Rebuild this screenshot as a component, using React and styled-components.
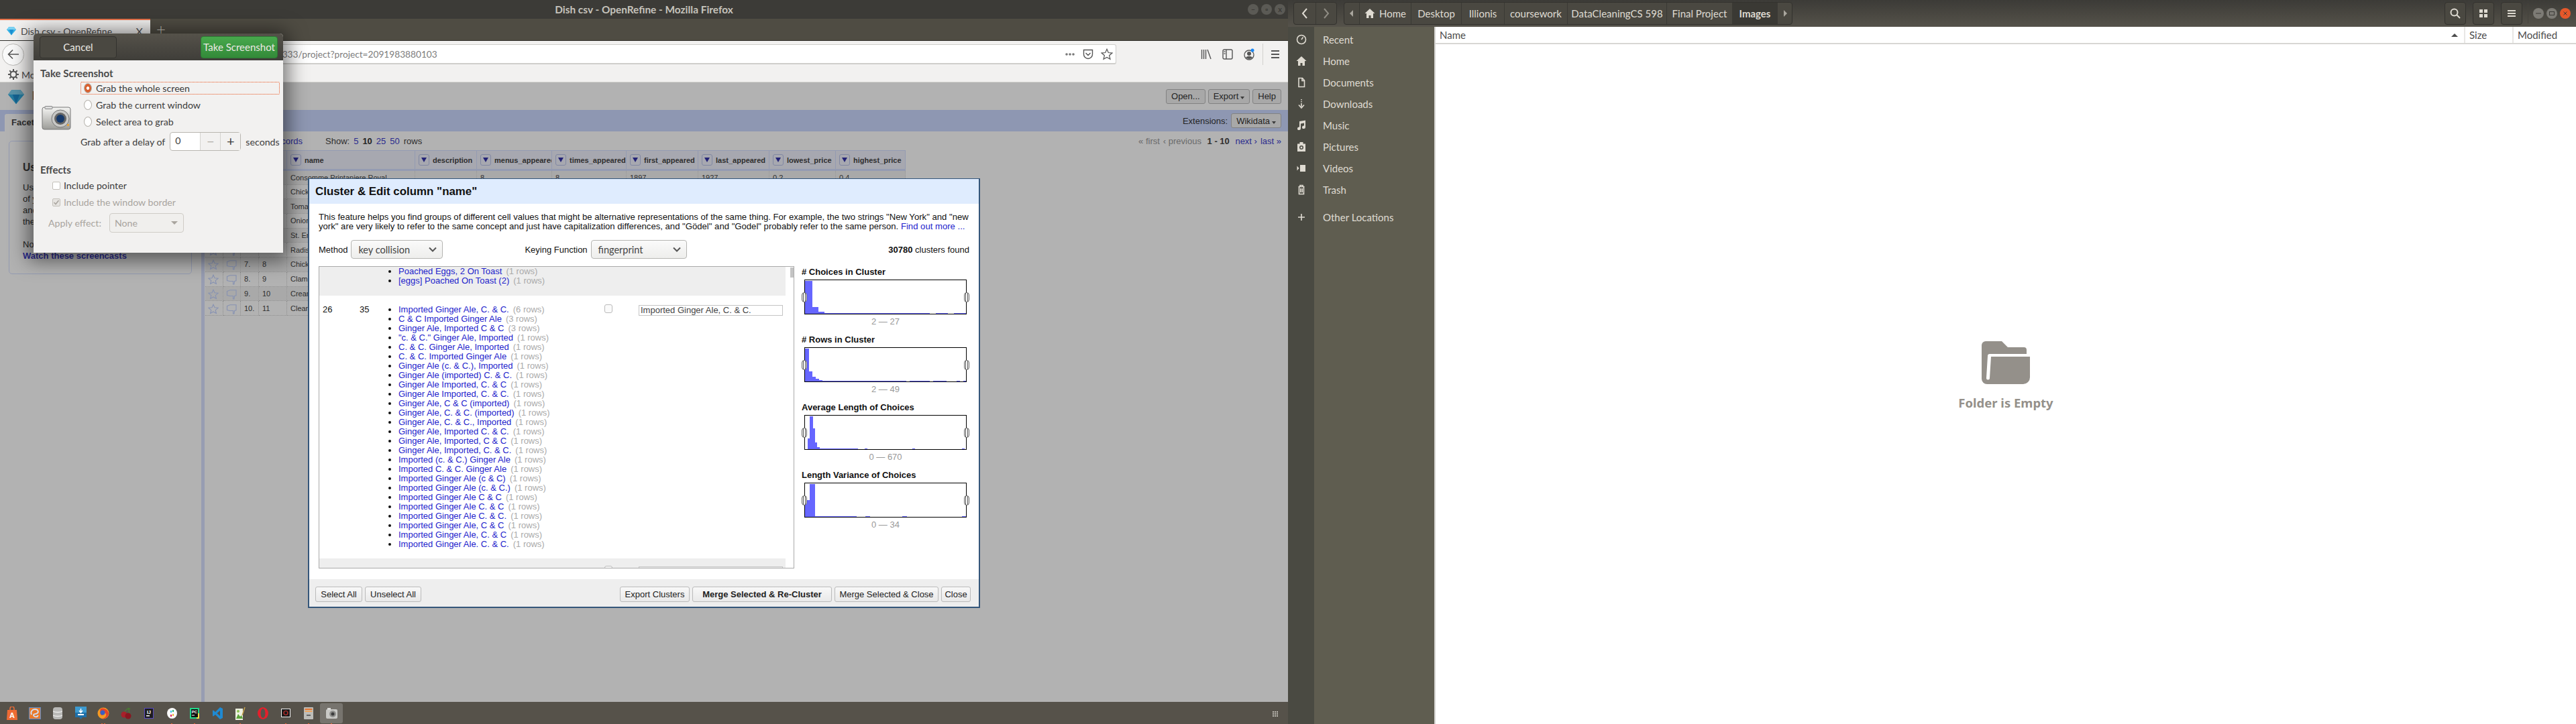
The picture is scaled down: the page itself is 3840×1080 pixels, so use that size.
import styled, { createGlobalStyle } from "styled-components";

const GlobalStyle = createGlobalStyle`
  html, body { margin: 0; padding: 0; background: #3c3b37; }
  * { box-sizing: border-box; }
`;

const UI_FONT = `Lato, "Noto Sans", sans-serif`;
const PAGE_FONT = `"Liberation Sans", Arial, sans-serif`;

const Desktop = styled.div`
  position: relative;
  display: flex;
  width: 3840px;
  height: 1080px;
  overflow: hidden;
  font-family: ${UI_FONT};
`;

/* ---------- firefox window ---------- */
const Firefox = styled.div`
  display: flex;
  flex-direction: column;
  width: 1920px;
  height: 1080px;
  flex: none;
`;

const TitleBar = styled.div`
  position: relative;
  height: 28px;
  display: flex;
  align-items: center;
  justify-content: center;
  background: #3c3b37;
  color: #c6c3bc;
  font-size: 15.4px;
  font-weight: 700;
`;

const WindowDots = styled.div`
  position: absolute;
  right: 4px;
  top: 6px;
  display: flex;
  gap: 4px;
`;

const WindowDot = styled.div`
  width: 16px;
  height: 16px;
  border-radius: 50%;
  background: #5b5a55;
  color: #3c3b37;
  font-size: 11px;
  line-height: 16px;
  text-align: center;
`;

const TabBar = styled.div`
  height: 33px;
  display: flex;
  align-items: stretch;
  background: #4f4c43;
  border-bottom: 1px solid #2f2e2a;
`;

const Tab = styled.div`
  width: 224px;
  display: flex;
  align-items: center;
  gap: 7px;
  padding: 2px 11px 0 10px;
  background: #f2f1f0;
  border-top: 2px solid #e9734a;
  color: #4c4c4c;
  font-size: 14px;
`;

const TabClose = styled.span`
  margin-left: auto;
  font-size: 16px;
  color: #555;
`;

const NewTab = styled.div`
  width: 32px;
  text-align: center;
  color: #c9c6bf;
  font-size: 24px;
  line-height: 30px;
  font-weight: 300;
`;

const NavBar = styled.div`
  height: 39px;
  display: flex;
  align-items: center;
  padding: 1px 10px 0 3px;
  background: #f2f1f0;
`;

const BackButton = styled.div`
  width: 33px;
  height: 33px;
  border: 1px solid #b9b8b5;
  border-radius: 50%;
  background: #fafafa;
  display: flex;
  align-items: center;
  justify-content: center;
`;

const AddressBar = styled.div`
  flex: none;
  width: 1534px;
  height: 30px;
  margin-left: 94px;
  display: flex;
  align-items: center;
  gap: 11px;
  padding: 0 4px 0 221px;
  background: #fff;
  border: 1px solid #cfcecb;
  border-bottom-width: 2px;
  border-radius: 3px;
  color: #7d7d7d;
  font-size: 13.7px;
`;

const Url = styled.span`
  flex: 1;
`;

const NavTools = styled.div`
  display: flex;
  align-items: center;
  gap: 16px;
  margin-left: 126px;
  height: 30px;
`;

const NavDivider = styled.div`
  width: 1px;
  height: 32px;
  background: #d2d1ce;
  margin: 0 -5px 0 -4px;
`;

const BookmarkBar = styled.div`
  height: 23px;
  display: flex;
  align-items: center;
  gap: 4px;
  padding-left: 12px;
  background: #f2f1f0;
  border-bottom: 1px solid #cfcecb;
  color: #4c4c4c;
  font-size: 14px;
`;

/* ---------- openrefine page (dimmed by a modal shade) ---------- */
const Page = styled.div`
  position: relative;
  flex: 1;
  min-height: 0;
  display: flex;
  flex-direction: column;
  overflow: hidden;
  background: #fff;
  font-family: ${PAGE_FONT};
  font-size: 13px;
  color: #222;
`;

const Shade = styled.div`
  position: absolute;
  inset: 0;
  background: rgba(0, 0, 0, 0.3);
`;

const PageHeader = styled.div`
  height: 41px;
  flex: none;
  display: flex;
  align-items: center;
  padding: 0 10px 0 12px;
  gap: 4px;
`;

const ProjectName = styled.div`
  margin-left: 8px;
  margin-right: auto;
  font-size: 18px;
  font-weight: 700;
`;

const PageButton = styled.div`
  height: 22px;
  display: flex;
  align-items: center;
  gap: 3px;
  padding: 0 7px;
  border: 1px solid #bbb;
  border-radius: 3px;
  background: #f1f1f1;
  color: #333;
  font-size: 13px;
`;

const Caret = styled.span`
  width: 0;
  height: 0;
  margin-top: 5px;
  border-left: 3.5px solid transparent;
  border-right: 3.5px solid transparent;
  border-top: 4px solid #555;
`;

const Band = styled.div`
  height: 32px;
  flex: none;
  display: flex;
  align-items: flex-end;
  padding: 0 10px 0 7px;
  background: #ccd9ff;
`;

const FacetTab = styled.div`
  height: 26px;
  padding: 5px 10px;
  background: #fff;
  border-radius: 3px 3px 0 0;
  font-weight: 700;
  font-size: 13px;
  color: #444;
`;

const Extensions = styled.div`
  margin-left: auto;
  align-self: center;
  display: flex;
  align-items: center;
  gap: 5px;
  font-size: 13px;
  color: #333;
`;

const PageBody = styled.div`
  flex: 1;
  display: flex;
  min-height: 0;
`;

const LeftPanel = styled.div`
  width: 300px;
  flex: none;
  padding: 14px 14px 0 13px;
`;

const HelpBox = styled.div`
  height: 199px;
  padding: 30px 20px;
  border: 1px solid #d5deff;
  border-radius: 5px;
  font-size: 13px;
  line-height: 17px;
  color: #333;
`;

const HelpTitle = styled.div`
  font-size: 15.6px;
  font-weight: 700;
  color: #444;
  margin-bottom: 13px;
`;

const HelpLink = styled.div`
  font-weight: 700;
  color: #4040cc;
`;

const PanelDivider = styled.div`
  width: 5px;
  flex: none;
  background: #d9e1ff;
`;

const DataPanel = styled.div`
  flex: 1;
  min-width: 0;
`;

const ViewBar = styled.div`
  height: 28px;
  display: flex;
  align-items: center;
  gap: 34px;
  padding-right: 10px;
  font-size: 13px;
  color: #444;
`;

const ViewMode = styled.div`
  width: 146px;
  text-align: right;
  white-space: nowrap;
`;

const PageLink = styled.a`
  color: ${(p) => (p.$off ? "#999" : p.$on ? "#333" : "#4040cc")};
  font-weight: ${(p) => (p.$on ? 700 : 400)};
`;

const ShowRows = styled.div`
  display: flex;
  gap: 6px;
`;

const Pager = styled.div`
  margin-left: auto;
  display: flex;
  gap: 5px;
`;

const Grid = styled.table`
  table-layout: fixed;
  width: 1044px;
  border-collapse: collapse;
  font-size: 11px;
  color: #444;
`;

const HeadCell = styled.th`
  height: 29px;
  padding: 0 0 0 5px;
  text-align: left;
  white-space: nowrap;
  overflow: hidden;
  background: #f0f1fd;
  border: 1px solid #d5deff;
  border-bottom: 3px solid #d5deff;
  font-size: 11px;
  color: #444;
`;

const HeadInner = styled.div`
  display: flex;
  align-items: center;
  gap: 5px;
`;

const ColumnMenu = styled.span`
  flex: none;
  width: 16px;
  height: 17px;
  display: flex;
  align-items: center;
  justify-content: center;
  border: 1px solid #b9c3ea;
  border-radius: 3px;
  &::after {
    content: "";
    border-left: 4.5px solid transparent;
    border-right: 4.5px solid transparent;
    border-top: 7px solid #3333aa;
  }
`;

const Row = styled.tr`
  height: 21.7px;
  background: ${(p) => (p.$odd ? "#f2f2f2" : "transparent")};
`;

const Cell = styled.td`
  padding: 0 0 0 5px;
  border-right: 1px dotted #ccc;
  border-bottom: 1px dotted #ccc;
  white-space: nowrap;
  overflow: hidden;
`;

const MarkCell = styled(Cell)`
  padding: 2px 0 0 4px;
  line-height: 0;
`;

/* ---------- dock ---------- */
const Dock = styled.div`
  position: relative;
  height: 33px;
  flex: none;
  display: flex;
  align-items: center;
  padding-left: 1px;
  background: #56524a;
`;

const DockItem = styled.div`
  position: relative;
  width: 34px;
  height: 30px;
  display: flex;
  align-items: center;
  justify-content: center;
  border-radius: 3px;
  background: ${(p) => (p.$active ? "#77746e" : "transparent")};
`;

const DockDots = styled.div`
  position: absolute;
  bottom: -2px;
  display: flex;
  gap: 2px;
`;

const DockDot = styled.span`
  width: 2px;
  height: 2px;
  background: #e9622c;
`;

const AppGrid = styled.div`
  position: absolute;
  right: 15px;
  top: 14px;
  display: grid;
  grid-template-columns: repeat(3, 2px);
  gap: 1px;
  & > span { width: 2px; height: 2px; background: #bfbcb5; }
`;

/* ---------- nautilus window ---------- */
const Files = styled.div`
  flex: 1;
  display: flex;
  flex-direction: column;
  background: #fff;
`;

const HeaderBar = styled.div`
  height: 40px;
  flex: none;
  display: flex;
  align-items: center;
  padding: 0 8px;
  gap: 10px;
  background: linear-gradient(#3c3b37, #55524a);
`;

const ButtonGroup = styled.div`
  display: flex;
  height: 34px;
  border: 1px solid #33322e;
  border-radius: 4px;
  background: #4a4841;
  color: #dfdbd2;
  font-size: 15px;
`;

const Segment = styled.div`
  width: ${(p) => p.$w}px;
  display: flex;
  align-items: center;
  justify-content: center;
  gap: 6px;
  border-left: ${(p) => (p.$first ? "none" : "1px solid #3a3934")};
  background: ${(p) => (p.$current ? "#3a3934" : "transparent")};
  font-weight: ${(p) => (p.$current ? 700 : 400)};
  color: ${(p) => (p.$dim ? "#8f8c84" : "#dfdbd2")};
`;

const HeaderTools = styled.div`
  margin-left: auto;
  display: flex;
  align-items: center;
  gap: 10px;
`;

const ToolButton = styled.div`
  width: 32px;
  height: 34px;
  display: flex;
  align-items: center;
  justify-content: center;
  border: 1px solid #33322e;
  border-radius: 4px;
  background: #4a4841;
`;

const HeaderDivider = styled.div`
  width: 1px;
  height: 30px;
  margin: 0 -3px 0 -2px;
  background: #45433d;
`;

const WindowButtons = styled.div`
  display: flex;
  gap: 4px;
`;

const WindowButton = styled.div`
  width: 16px;
  height: 16px;
  border-radius: 50%;
  display: flex;
  align-items: center;
  justify-content: center;
  background: ${(p) => (p.$close ? "#e6582a" : "#7d7b75")};
  color: #3c3b37;
`;

const FilesBody = styled.div`
  flex: 1;
  display: flex;
  min-height: 0;
`;

const Sidebar = styled.div`
  width: 218px;
  flex: none;
  display: flex;
  flex-direction: column;
  padding-top: 3px;
  background: linear-gradient(90deg, #4a4a42 39px, #5f5d50 39px);
`;

const SidebarItem = styled.div`
  height: 32px;
  margin-top: ${(p) => (p.$gap ? "9px" : "0")};
  display: flex;
  align-items: center;
  color: #dfdbd2;
  font-size: 15px;
`;

const SidebarIcon = styled.div`
  width: 39px;
  flex: none;
  display: flex;
  justify-content: center;
`;

const SidebarLabel = styled.span`
  margin-left: 13px;
`;

const Content = styled.div`
  flex: 1;
  display: flex;
  flex-direction: column;
  border-left: 2px solid #d4d3d0;
`;

const ColumnBar = styled.div`
  height: 26px;
  flex: none;
  display: grid;
  grid-template-columns: 1fr 72px 95px;
  background: #fff;
  border-bottom: 2px solid #d8d7d4;
  color: #4c4c4c;
  font-size: 15px;
`;

const ColumnHead = styled.div`
  position: relative;
  display: flex;
  align-items: center;
  padding-left: 6px;
  border-left: ${(p) => (p.$first ? "none" : "2px solid #e8e7e5")};
`;

const SortArrow = styled.span`
  margin-left: auto;
  margin-right: 9px;
  border-left: 5px solid transparent;
  border-right: 5px solid transparent;
  border-bottom: 5px solid #4c4c4c;
`;

const EmptyState = styled.div`
  flex: 1;
  display: flex;
  flex-direction: column;
  align-items: center;
  justify-content: center;
  gap: 15px;
  padding-bottom: 24px;
  color: #94908a;
  font-family: "Noto Sans", sans-serif;
  font-size: 18.5px;
  font-weight: 700;
`;

/* ---------- take screenshot window ---------- */
const ShotWindow = styled.div`
  position: absolute;
  left: 50px;
  top: 50px;
  width: 372px;
  height: 327px;
  background: #f2f1f0;
  border-radius: 5px 5px 0 0;
  box-shadow: 0 4px 28px 8px rgba(0, 0, 0, 0.5);
  color: #3d3d3d;
  font-size: 14.2px;
`;

const ShotHeader = styled.div`
  height: 40px;
  display: flex;
  align-items: center;
  justify-content: space-between;
  padding: 0 8px 0 9px;
  background: linear-gradient(#55524a, #3f3e39);
  border-radius: 5px 5px 0 0;
`;

const ShotButton = styled.div`
  width: 115px;
  height: 33px;
  display: flex;
  align-items: center;
  justify-content: center;
  border: 1px solid ${(p) => (p.$primary ? "#2c7a33" : "#33322e")};
  border-radius: 4px;
  background: ${(p) => (p.$primary ? "linear-gradient(#47a84c, #338a39)" : "#4a4841")};
  color: #ebe9e4;
  font-size: 15px;
`;

const ShotBody = styled.div`
  padding: 10px 10px 0;
`;

const ShotHeading = styled.div`
  font-size: 15px;
  font-weight: 700;
  line-height: 18px;
  color: #4a4a4a;
`;

const ShotGrab = styled.div`
  display: flex;
  margin-top: 4px;
`;

const CameraSlot = styled.div`
  width: 60px;
  flex: none;
  display: flex;
  align-items: center;
  padding: 4px 0 0 2px;
`;

const ShotOptions = styled.div`
  flex: 1;
`;

const FocusRing = styled.div`
  border: 1px dotted ${(p) => (p.$on ? "#e95420" : "transparent")};
  border-radius: 2px;
  height: 19px;
  margin-bottom: 6px;
  display: flex;
  align-items: center;
  gap: 6px;
  padding-left: 4px;
`;

const Radio = styled.span`
  width: 12px;
  height: 15px;
  flex: none;
  border-radius: 50%;
  border: 1px solid #b5b2ac;
  background: ${(p) =>
    p.$on ? "radial-gradient(circle, #fff 0 2px, #d9602f 2.6px)" : "#fff"};
`;

const DelayRow = styled.div`
  display: flex;
  align-items: center;
  gap: 7px;
  white-space: nowrap;
`;

const SpinBox = styled.div`
  width: 106px;
  flex: none;
  height: 28px;
  display: flex;
  border: 1px solid #b9b6b0;
  border-radius: 4px;
  background: #fff;
`;

const SpinValue = styled.div`
  flex: 1;
  padding: 3px 0 0 7px;
`;

const SpinButton = styled.div`
  width: 30px;
  text-align: center;
  border-left: 1px solid #d5d3cf;
  background: #f2f1f0;
  font-size: 20px;
  line-height: 24px;
  color: ${(p) => (p.$dim ? "#b0ada7" : "#3d3d3d")};
`;

const EffectsHeading = styled(ShotHeading)`
  margin: 19px 0 2px;
`;

const CheckRow = styled.div`
  height: 25px;
  display: flex;
  align-items: center;
  gap: 5px;
  padding-left: 18px;
  color: ${(p) => (p.$off ? "#a9a59f" : "#3d3d3d")};
`;

const CheckBox = styled.span`
  width: 12px;
  height: 12px;
  flex: none;
  display: flex;
  align-items: center;
  justify-content: center;
  border: 1px solid #c3c0ba;
  border-radius: 2px;
  background: ${(p) => (p.$off ? "#e6e4e1" : "#fff")};
`;

const EffectRow = styled.div`
  display: flex;
  align-items: center;
  gap: 12px;
  margin-top: 4px;
  padding-left: 12px;
  color: #a9a59f;
`;

const EffectSelect = styled.div`
  width: 111px;
  height: 29px;
  display: flex;
  align-items: center;
  justify-content: space-between;
  padding: 0 8px 0 7px;
  border: 1px solid #cfccc7;
  border-radius: 4px;
  background: #f0efed;
`;

const EffectCaret = styled.span`
  border-left: 5px solid transparent;
  border-right: 5px solid transparent;
  border-top: 5px solid #a9a59f;
`;

/* ---------- cluster dialog ---------- */
const ClusterDialog = styled.div`
  position: absolute;
  left: 459px;
  top: 266px;
  width: 1002px;
  height: 641px;
  display: flex;
  flex-direction: column;
  background: #fff;
  border: 2px solid #34567a;
  border-top-width: 1px;
  font-family: ${PAGE_FONT};
  font-size: 13px;
  color: #111;
`;

const DialogTitle = styled.div`
  height: 37px;
  flex: none;
  padding: 9px 0 0 9px;
  background: #dfecfe;
  font-size: 16.9px;
  font-weight: 700;
  line-height: 20px;
`;

const DialogBody = styled.div`
  flex: 1;
  min-height: 0;
  padding: 13px 0 0 14px;
`;

const Intro = styled.div`
  width: 970px;
  line-height: 14px;
  font-size: 13.13px;
`;

const IntroLink = styled.a`
  color: #2222cc;
`;

const MethodRow = styled.div`
  width: 970px;
  margin-top: 13px;
  display: flex;
  align-items: center;
  height: 28px;
`;

const Picker = styled.div`
  width: ${(p) => p.$w}px;
  height: 28px;
  margin-left: 5px;
  margin-right: ${(p) => p.$after || 0}px;
  display: flex;
  align-items: center;
  justify-content: space-between;
  padding: 0 8px 0 10px;
  border: 1px solid #b5b5b2;
  border-radius: 4px;
  background: linear-gradient(#fafafa, #eeeeec);
  font-family: ${UI_FONT};
  font-size: 14.5px;
  color: #444;
`;

const ClusterCount = styled.div`
  margin-left: auto;
`;

const ClusterColumns = styled.div`
  display: flex;
  margin-top: 11px;
  gap: 11px;
`;

const ClusterBox = styled.div`
  position: relative;
  width: 709px;
  height: 451px;
  overflow: hidden;
  border: 1px solid #aaa;
  flex: none;
`;

const ScrollTrack = styled.div`
  position: absolute;
  right: 0;
  top: 0;
  width: 12px;
  height: 100%;
  background: #fff;
  &::after {
    content: "";
    position: absolute;
    right: 0;
    top: 1px;
    width: 5px;
    height: 15px;
    background: #c4c4c4;
  }
`;

const ClusterRow = styled.div`
  width: 696px;
  display: flex;
  align-items: flex-start;
  background: ${(p) => (p.$gray ? "#eeeeee" : "#fff")};
  height: ${(p) => p.$h}px;
  padding-top: ${(p) => p.$top || 0}px;
`;

const CountCell = styled.div`
  width: ${(p) => p.$w}px;
  flex: none;
  padding-left: 5px;
  line-height: 14px;
`;

const Choices = styled.ul`
  width: ${(p) => p.$w}px;
  flex: none;
  margin: 0;
  padding: 0 0 0 ${(p) => p.$indent}px;
  line-height: 14px;
`;

const Choice = styled.li`
  white-space: nowrap;
`;

const ChoiceLink = styled.a`
  color: #2222cc;
`;

const ChoiceRows = styled.span`
  margin-left: 6px;
  color: #aaa;
`;

const ClusterCheck = styled.span`
  flex: none;
  width: 12px;
  height: 13px;
  margin: -1px 39px 0 0;
  border: 1px solid #bbb;
  border-radius: 3px;
  background: #fafafa;
`;

const ClusterInput = styled.div`
  flex: none;
  width: 215px;
  height: 16px;
  padding-left: 2px;
  line-height: 14px;
  border: 1px solid #c4c4c4;
  white-space: nowrap;
  color: #444;
`;

const HistColumn = styled.div`
  flex: none;
  width: 260px;
  margin-top: 1px;
`;

const HistBlock = styled.div`
  height: 101px;
`;

const HistLabel = styled.div`
  height: 15px;
  line-height: 15px;
  font-weight: 700;
`;

const HistFrame = styled.div`
  position: relative;
  width: 242px;
  height: 52px;
  margin: 4px 0 0 4px;
  border: 1px solid #000;
`;

const HistHandle = styled.div`
  position: absolute;
  top: 18px;
  ${(p) => (p.$right ? "right: -5px;" : "left: -5px;")}
  width: 8px;
  height: 15px;
  border: 1px solid #666;
  border-radius: 4px;
  background: linear-gradient(90deg, #fff 1px, #555 1px, #555 2px, #fff 2px, #fff 4px, #555 4px, #555 5px, #fff 5px);
`;

const HistBars = styled.svg`
  display: block;
`;

const HistRange = styled.div`
  margin: 3px 0 0 4px;
  width: 242px;
  text-align: center;
  line-height: 15px;
  color: #999;
`;

const DialogFooter = styled.div`
  height: 41px;
  flex: none;
  display: flex;
  align-items: center;
  gap: 4px;
  padding: 3px 11px 0 9px;
  background: #eeeeee;
`;

const FooterButton = styled.div`
  height: 23px;
  display: flex;
  align-items: center;
  justify-content: center;
  width: ${(p) => p.$w}px;
  margin-left: ${(p) => p.$push || 0}px;
  border: 1px solid #bbb;
  border-radius: 3px;
  background: linear-gradient(#f8f8f8, #e9e9e9);
  font-weight: ${(p) => (p.$strong ? 700 : 400)};
  color: #222;
`;

/* ---------- drawings ---------- */
const Diamond = ({ size = 16 }) => (
  <svg width={size} height={size} viewBox="0 0 16 16">
    <path d="M3.5 1.5h9L16 6 8 15.5 0 6z" fill="#35b2e6" />
    <path d="M3.5 1.5h9L16 6H0z" fill="#7fd3f3" />
    <path d="M4.5 6h7L8 15.5z" fill="#1d8fd1" />
  </svg>
);

const StarMark = ({ color = "#c2d2ff", size = 16 }) => (
  <svg width={size} height={size} viewBox="0 0 16 16" fill="none" stroke={color} strokeWidth="1.1">
    <path d="M8 1.2l2 4.6 5 .5-3.8 3.3 1.2 4.9L8 12 3.6 14.5l1.2-4.9L1 6.3l5-.5z" />
  </svg>
);

const FlagMark = () => (
  <svg width="16" height="16" viewBox="0 0 16 16" fill="none" stroke="#c2d2ff" strokeWidth="1.1">
    <path d="M1.5 3.5L6 1.8h9v8l-2.4.6L12 15h-1.5l.2-4.5H5.5L1.5 9.5z" />
  </svg>
);

const HeaderIcon = ({ d, fill, w = 16, stroke = "#dfdbd2" }) => (
  <svg width={w} height={w} viewBox="0 0 16 16" fill={fill ? stroke : "none"} stroke={fill ? "none" : stroke} strokeWidth="1.6">
    <path d={d} />
  </svg>
);

const ICONS = {
  recent: "M8 1.5a6.5 6.5 0 1 0 0 13 6.5 6.5 0 0 0 0-13zM8 8l2.5-3.5",
  documents: "M4 1.5h5.5L12.5 5v9.5H4zM9 1.5V5.500h3.500",
  downloads: "M8 1v1.500M8 4v1.500M8 7v5M4 9.500l4 4.500 4-4.500",
  trash: "M3.500 3.500h9M6 3.500V1.500h4v2M4.500 3.500v11h7v-11M6.800 6v6M9.200 6v6",
  plus: "M8 3v10M3 8h10",
};

const FILLS = {
  home: "M8 1L.5 8H3v7h3.500v-4h3v4H13V8h2.500z",
  music: "M5 2l9-1.500v10.200a2.500 2.300 0 1 1-2-2.200V4.500L7 5.500v7.200a2.500 2.300 0 1 1-2-2.200z",
  pictures: "M5.500 1h5v2.500H14v11.500H2V3.500h3.500zM8 6a3 3 0 1 0 0 6 3 3 0 0 0 0-6zm0 1.500a1.500 1.500 0 1 1 0 3 1.500 1.500 0 0 1 0-3z",
  videos: "M6 3h8v10H6zM1.500 4.500l3 3.500-3 3.500z",
};

const NavArrow = ({ left, color = "#dfdbd2" }) => (
  <svg width="14" height="18" viewBox="0 0 14 18" fill="none" stroke={color} strokeWidth="2">
    <path d={left ? "M10 2L4 9l6 7" : "M4 2l6 7-6 7"} />
  </svg>
);

const PathCaret = ({ left }) => (
  <svg width="8" height="14" viewBox="0 0 8 14">
    <path d={left ? "M6 2L1 7l5 5z" : "M2 2l5 5-5 5z"} fill="#a9a69e" />
  </svg>
);

const Folder = () => (
  <svg width="72" height="64" viewBox="0 0 72 64">
    <path d="M14 23h58v31a10 10 0 0 1-10 10H8a8 8 0 0 1-8-8V6a6 6 0 0 1 6-6h24l9 9h24a4 4 0 0 1 4 4v6H12a3 3 0 0 0-3 3L7 55a2.500 2.500 0 0 0 5 0z" fill="#94908a" />
  </svg>
);

const Camera = () => (
  <svg width="44" height="36" viewBox="0 0 44 36">
    <defs>
      <linearGradient id="camBody" x1="0" y1="0" x2="0" y2="1">
        <stop offset="0" stopColor="#f4f4f2" />
        <stop offset="1" stopColor="#9c9c98" />
      </linearGradient>
    </defs>
    <rect x="1" y="2" width="42" height="33" rx="3" fill="url(#camBody)" stroke="#777" />
    <rect x="5" y="0.500" width="11" height="4" rx="1" fill="#ddd" stroke="#888" />
    <circle cx="28" cy="19" r="13" fill="#c8c8c6" stroke="#777" />
    <circle cx="28" cy="19" r="9" fill="#666" />
    <circle cx="28" cy="19" r="6" fill="#173a6b" />
    <rect x="38" y="27" width="3" height="3" fill="#e8a33c" />
  </svg>
);

const Chevron = () => (
  <svg width="12" height="8" viewBox="0 0 12 8" fill="none" stroke="#555" strokeWidth="2">
    <path d="M1 1.500l5 5 5-5" />
  </svg>
);

const DOCK_ART = [
  <svg key="a" width="18" height="20" viewBox="0 0 18 20">
    <path d="M2 5h14l1 15H1z" fill="#ef6b34" />
    <path d="M6 6V3a3 3 0 0 1 6 0v3" fill="none" stroke="#ef6b34" strokeWidth="1.500" />
    <text x="9" y="17" fontSize="11" fontWeight="700" fill="#fff" textAnchor="middle" fontFamily="Liberation Sans">A</text>
  </svg>,
  <svg key="b" width="18" height="18" viewBox="0 0 18 18">
    <rect x="0.500" y="0.500" width="17" height="17" fill="#e97a2a" stroke="#5c8fd0" />
    <path d="M9 3c5 0 6 4 3.500 6S7 9 7 11.500 12 16 14 12M9 3C5 3 2 7 4 11" fill="none" stroke="#cfe0f5" strokeWidth="1.800" />
  </svg>,
  <svg key="c" width="14" height="20" viewBox="0 0 14 20">
    <rect x="0" y="1" width="14" height="18" rx="4" fill="#b9b9b7" />
    <path d="M0 7c3 2 11 2 14 0M0 13c3 2 11 2 14 0" fill="none" stroke="#ececea" strokeWidth="1.400" />
  </svg>,
  <svg key="d" width="17" height="20" viewBox="0 0 17 20">
    <path d="M0 0h17v16h-6l-2.500 3L6 16H0z" fill="#1f6fa8" />
    <rect x="0" y="0" width="17" height="9" fill="#3d9ad0" />
    <path d="M8.500 3v5M6 6l2.500 3L11 6" fill="none" stroke="#fff" strokeWidth="1.500" />
    <rect x="4" y="11" width="9" height="2" fill="#fff" />
  </svg>,
  <svg key="e" width="18" height="18" viewBox="0 0 18 18">
    <circle cx="9" cy="9" r="8.500" fill="#f59a23" />
    <path d="M5 2C9 0 16 3 17 9c0 6-6 9-10 8 5-1 7-4 6-7-1-2-4-3-5-1 2 1 1 3-1 3S3 8 5 2z" fill="#e6442a" />
    <circle cx="8" cy="8" r="3.500" fill="#3b5fc2" />
  </svg>,
  <svg key="f" width="16" height="18" viewBox="0 0 16 18">
    <path d="M5 8C7 4 9 3 12 1M12 1c0 4 0 6 1 8" fill="none" stroke="#4b7a34" strokeWidth="1.400" />
    <path d="M10 1l5 1-3 2z" fill="#4b7a34" />
    <circle cx="5" cy="11" r="4.500" fill="#a8202a" />
    <circle cx="11" cy="13" r="4.500" fill="#8a1620" />
  </svg>,
  <svg key="g" width="14" height="16" viewBox="0 0 14 16">
    <rect x="0.500" y="0.500" width="13" height="15" fill="#1d1d1f" stroke="#5a4bc2" />
    <text x="7" y="9" fontSize="7" fontWeight="700" fill="#fff" textAnchor="middle" fontFamily="Liberation Sans">IJ</text>
    <rect x="3" y="11" width="5" height="1.500" fill="#fff" />
  </svg>,
  <svg key="h" width="15" height="16" viewBox="0 0 15 16">
    <ellipse cx="7.500" cy="8" rx="7.500" ry="8" fill="#fafafa" />
    <path d="M6 4v3" stroke="#36c5f0" strokeWidth="2" />
    <path d="M9 3v3" stroke="#2eb67d" strokeWidth="2" />
    <path d="M6 10v3" stroke="#e01e5a" strokeWidth="2" />
    <path d="M9 9v3" stroke="#ecb22e" strokeWidth="2" />
  </svg>,
  <svg key="i" width="14" height="16" viewBox="0 0 14 16">
    <rect x="0" y="0" width="14" height="16" fill="#21d789" />
    <rect x="10" y="8" width="4" height="8" fill="#f5e04a" />
    <rect x="2" y="2" width="10" height="12" fill="#111" />
    <text x="7" y="8" fontSize="6" fontWeight="700" fill="#fff" textAnchor="middle" fontFamily="Liberation Sans">PC</text>
    <rect x="3" y="10.500" width="4" height="1" fill="#fff" />
  </svg>,
  <svg key="j" width="15" height="18" viewBox="0 0 15 18">
    <path d="M11 0l4 2v14l-4 2L4 11l-3 2.500L0 13V5l1-.500L4 7z" fill="#1f8ad2" />
    <path d="M11 5L6.500 9 11 13z" fill="#56524a" />
  </svg>,
  <svg key="k" width="15" height="20" viewBox="0 0 15 20">
    <path d="M0 3h11v17H0z" fill="#eef2e2" />
    <path d="M1 18l3-7 3 4 2-2 2 5z" fill="#5ba33a" />
    <circle cx="4" cy="7" r="2" fill="#8cc152" />
    <path d="M10 13l4-12" stroke="#c9a44a" strokeWidth="1.500" />
  </svg>,
  <svg key="l" width="16" height="18" viewBox="0 0 16 18">
    <ellipse cx="8" cy="9" rx="8" ry="9" fill="#e3202c" />
    <ellipse cx="8" cy="9" rx="3.500" ry="7" fill="#56524a" />
  </svg>,
  <svg key="m" width="14" height="13" viewBox="0 0 14 13">
    <rect x="0.500" y="0.500" width="13" height="12" fill="#1a1a1a" stroke="#eee" />
    <circle cx="7" cy="6.500" r="3" fill="none" stroke="#c9302c" strokeWidth="1.200" />
  </svg>,
  <svg key="n" width="14" height="18" viewBox="0 0 14 18">
    <rect x="0" y="0" width="14" height="18" rx="1" fill="#bdbdb9" />
    <rect x="1.500" y="2" width="11" height="2" fill="#e9752e" />
    <rect x="1.500" y="5" width="11" height="2" fill="#f0a75f" />
    <rect x="4" y="11" width="6" height="2" fill="#666" />
  </svg>,
  <svg key="o" width="17" height="16" viewBox="0 0 17 16">
    <rect x="0" y="2" width="17" height="14" rx="2" fill="#c9c9c6" />
    <rect x="2" y="0" width="5" height="3" fill="#dcdcda" />
    <circle cx="10" cy="9" r="5" fill="#8f8f8c" />
    <circle cx="10" cy="9" r="2.500" fill="#3d3d3d" />
  </svg>,
];

/* ---------- data ---------- */
const DATA_COLUMNS = [
  ["name", 191, "Consomme Printaniere Royal"],
  ["description", 92, ""],
  ["menus_appeared", 112, "8"],
  ["times_appeared", 111, "8"],
  ["first_appeared", 107, "1897"],
  ["last_appeared", 106, "1927"],
  ["lowest_price", 99, "0.2"],
  ["highest_price", 104, "0.4"],
];

const ROWS = [
  [1, 1, "Consomme Printaniere Royal"],
  [2, 2, "Chicken Gumbo"],
  [3, 3, "Tomato Aux Croutons"],
  [4, 4, "Onion Au Gratin"],
  [5, 5, "St. Emilion"],
  [6, 7, "Radishes"],
  [7, 8, "Chicken Soup"],
  [8, 9, "Clam Broth"],
  [9, 10, "Cream Of New Asparagus"],
  [10, 11, "Clear Green Turtle"],
];

const CHOICES = [
  ["Imported Ginger Ale, C. & C.", 6],
  ["C & C Imported Ginger Ale", 3],
  ["Ginger Ale, Imported C & C", 3],
  ['"c. & C." Ginger Ale, Imported', 1],
  ["C. & C. Ginger Ale, Imported", 1],
  ["C. & C. Imported Ginger Ale", 1],
  ["Ginger Ale (c. & C.), Imported", 1],
  ["Ginger Ale (imported) C. & C.", 1],
  ["Ginger Ale Imported, C. & C", 1],
  ["Ginger Ale Imported, C. & C.", 1],
  ["Ginger Ale, C & C (imported)", 1],
  ["Ginger Ale, C. & C. (imported)", 1],
  ["Ginger Ale, C. & C., Imported", 1],
  ["Ginger Ale, Imported C. & C.", 1],
  ["Ginger Ale, Imported, C & C", 1],
  ["Ginger Ale, Imported, C. & C.", 1],
  ["Imported (c. & C.) Ginger Ale", 1],
  ["Imported C. & C. Ginger Ale", 1],
  ["Imported Ginger Ale (c & C)", 1],
  ["Imported Ginger Ale (c. & C.)", 1],
  ["Imported Ginger Ale C & C", 1],
  ["Imported Ginger Ale C. & C", 1],
  ["Imported Ginger Ale C. & C.", 1],
  ["Imported Ginger Ale, C & C", 1],
  ["Imported Ginger Ale, C. & C", 1],
  ["Imported Ginger Ale. C. & C.", 1],
];

const HISTOGRAMS = [
  {
    label: "# Choices in Cluster",
    range: "2 — 27",
    bars: [[0, 11, 49], [11, 20, 10], [20, 29, 3], [29, 186, 1], [195, 213, 1], [222, 241, 1]],
  },
  {
    label: "# Rows in Cluster",
    range: "2 — 49",
    bars: [[0, 6, 49], [6, 11, 15], [11, 16, 7], [16, 21, 4], [21, 26, 2], [26, 151, 1], [156, 186, 1], [191, 211, 1], [226, 231, 1], [236, 241, 1]],
  },
  {
    label: "Average Length of Choices",
    range: "0 — 670",
    bars: [[4, 7, 16], [7, 12, 49], [12, 15, 31], [15, 18, 10], [18, 22, 3], [22, 79, 1], [89, 93, 1], [160, 164, 1], [234, 238, 1]],
  },
  {
    label: "Length Variance of Choices",
    range: "0 — 34",
    bars: [[0, 7, 25], [7, 15, 49], [15, 77, 1], [90, 97, 1], [145, 152, 1], [234, 241, 1]],
  },
];

const PATH_PARTS = [
  ["Desktop", 75],
  ["Illionis", 64],
  ["coursework", 94],
  ["DataCleaningCS 598", 148],
  ["Final Project", 98],
];

const SIDEBAR = [
  ["Recent", <HeaderIcon key="i" d={ICONS.recent} />],
  ["Home", <HeaderIcon key="i" d={FILLS.home} fill />],
  ["Documents", <HeaderIcon key="i" d={ICONS.documents} />],
  ["Downloads", <HeaderIcon key="i" d={ICONS.downloads} />],
  ["Music", <HeaderIcon key="i" d={FILLS.music} fill />],
  ["Pictures", <HeaderIcon key="i" d={FILLS.pictures} fill />],
  ["Videos", <HeaderIcon key="i" d={FILLS.videos} fill />],
  ["Trash", <HeaderIcon key="i" d={ICONS.trash} />],
];

const DOCK_DOTS = [0, 0, 0, 0, 2, 0, 0, 1, 1, 0, 1, 0, 1, 1, 1];

const Histogram = ({ label, range, bars }) => (
  <HistBlock>
    <HistLabel>{label}</HistLabel>
    <HistFrame>
      <HistBars width="240" height="50" viewBox="0 0 240 50">
        {bars.map(([from, to, h]) => (
          <rect key={from} x={from} y={50 - h} width={to - from} height={h} fill="#6666ff" />
        ))}
      </HistBars>
      <HistHandle />
      <HistHandle $right />
    </HistFrame>
    <HistRange>{range}</HistRange>
  </HistBlock>
);

const App = () => {
  return (
    <Desktop>
      <GlobalStyle />

      <Firefox>
        <TitleBar>
          Dish csv - OpenRefine - Mozilla Firefox
          <WindowDots>
            <WindowDot>–</WindowDot>
            <WindowDot>▫</WindowDot>
            <WindowDot>x</WindowDot>
          </WindowDots>
        </TitleBar>
        <TabBar>
          <Tab>
            <Diamond size={14} />
            Dish csv - OpenRefine
            <TabClose>X</TabClose>
          </Tab>
          <NewTab>+</NewTab>
        </TabBar>
        <NavBar>
          <BackButton>
            <svg width="18" height="16" viewBox="0 0 18 16" fill="none" stroke="#555" strokeWidth="1.600">
              <path d="M17 8H2M8 1.500L1.500 8 8 14.500" />
            </svg>
          </BackButton>
          <AddressBar>
            <Url>127.0.0.1:3333/project?project=2091983880103</Url>
            <svg width="16" height="6" viewBox="0 0 16 6" fill="#777">
              <circle cx="3" cy="3" r="1.800" />
              <circle cx="8" cy="3" r="1.800" />
              <circle cx="13" cy="3" r="1.800" />
            </svg>
            <svg width="16" height="16" viewBox="0 0 16 16" fill="none" stroke="#555" strokeWidth="1.400">
              <path d="M1.500 1.500h13V8a6.500 6.500 0 0 1-13 0zM4.500 6L8 9.500 11.500 6" />
            </svg>
            <StarMark color="#555" size={18} />
          </AddressBar>
          <NavTools>
            <svg width="16" height="16" viewBox="0 0 16 16" fill="none" stroke="#555" strokeWidth="1.400">
              <path d="M1.500 1v14M4.500 1v14M7.500 1v14M10 1l5 14" />
            </svg>
            <svg width="16" height="16" viewBox="0 0 16 16" fill="none" stroke="#555" strokeWidth="1.400">
              <rect x="1" y="1" width="14" height="14" rx="2" />
              <path d="M6 1v14" />
              <path d="M2.500 4h2M2.500 7h2" />
            </svg>
            <svg width="16" height="18" viewBox="0 0 16 18">
              <circle cx="8" cy="10" r="7" fill="none" stroke="#555" strokeWidth="1.300" />
              <circle cx="8" cy="8" r="3" fill="#555" />
              <path d="M3 14c2-3 8-3 10 0-2 2.500-8 2.500-10 0z" fill="#555" />
              <circle cx="13" cy="3" r="2.500" fill="#1a88f5" />
            </svg>
            <NavDivider />
            <svg width="14" height="14" viewBox="0 0 14 14" stroke="#555" strokeWidth="1.800">
              <path d="M1 2h12M1 7h12M1 12h12" />
            </svg>
          </NavTools>
        </NavBar>
        <BookmarkBar>
          <svg width="16" height="16" viewBox="0 0 16 16" fill="none" stroke="#555" strokeWidth="2">
            <circle cx="8" cy="8" r="4.500" />
            <path d="M8 0v3M8 13v3M0 8h3M13 8h3M2.300 2.300l2.100 2.100M11.600 11.600l2.100 2.100M13.700 2.300l-2.100 2.100M4.400 11.600l-2.100 2.100" />
          </svg>
          Most Visited
        </BookmarkBar>

        <Page>
          <PageHeader>
            <Diamond size={24} />
            <ProjectName>Dish csv</ProjectName>
            <PageButton>Open...</PageButton>
            <PageButton>Export <Caret /></PageButton>
            <PageButton>Help</PageButton>
          </PageHeader>
          <Band>
            <FacetTab>Facet / Filter</FacetTab>
            <Extensions>
              Extensions:
              <PageButton>Wikidata <Caret /></PageButton>
            </Extensions>
          </Band>
          <PageBody>
            <LeftPanel>
              <HelpBox>
                <HelpTitle>Using facets and filters</HelpTitle>
                Use facets and filters to select subsets<br />
                of your data to act on. Choose facet<br />
                and filter methods from the menus at<br />
                the top of each data column.<br />
                <br />
                Not sure how to get started?
                <HelpLink>Watch these screencasts</HelpLink>
              </HelpBox>
            </LeftPanel>
            <PanelDivider />
            <DataPanel>
              <ViewBar>
                <ViewMode>Show as: rows <PageLink>records</PageLink></ViewMode>
                <ShowRows>
                  Show:
                  <PageLink>5</PageLink>
                  <PageLink $on>10</PageLink>
                  <PageLink>25</PageLink>
                  <PageLink>50</PageLink>
                  rows
                </ShowRows>
                <Pager>
                  <PageLink $off>« first</PageLink>
                  <PageLink $off>‹ previous</PageLink>
                  <b>&nbsp;1 - 10&nbsp;</b>
                  <PageLink>next ›</PageLink>
                  <PageLink>last »</PageLink>
                </Pager>
              </ViewBar>
              <Grid>
                <colgroup>
                  <col width="27" />
                  <col width="26" />
                  <col width="27" />
                  <col width="42" />
                  {DATA_COLUMNS.map(([name, width]) => (
                    <col key={name} width={width} />
                  ))}
                </colgroup>
                <thead>
                  <tr>
                    <HeadCell colSpan={4}>
                      <HeadInner><ColumnMenu />All</HeadInner>
                    </HeadCell>
                    {DATA_COLUMNS.map(([name]) => (
                      <HeadCell key={name}>
                        <HeadInner><ColumnMenu />{name}</HeadInner>
                      </HeadCell>
                    ))}
                  </tr>
                </thead>
                <tbody>
                  {ROWS.map(([index, id, name]) => (
                    <Row key={index} $odd={index % 2 === 1}>
                      <MarkCell><StarMark /></MarkCell>
                      <MarkCell><FlagMark /></MarkCell>
                      <Cell>{index}.</Cell>
                      <Cell>{id}</Cell>
                      <Cell>{name}</Cell>
                      {index === 1 &&
                        DATA_COLUMNS.slice(1).map(([col, , value]) => <Cell key={col}>{value}</Cell>)}
                    </Row>
                  ))}
                </tbody>
              </Grid>
            </DataPanel>
          </PageBody>
          <Shade />
        </Page>

        <Dock>
          {DOCK_ART.map((art, i) => (
            <DockItem key={art.key} $active={i === 14}>
              {art}
              <DockDots>
                {Array.from({ length: DOCK_DOTS[i] }).map((_, n) => (
                  <DockDot key={n} />
                ))}
              </DockDots>
            </DockItem>
          ))}
          <AppGrid>
            {Array.from({ length: 9 }).map((_, n) => (
              <span key={n} />
            ))}
          </AppGrid>
        </Dock>
      </Firefox>

      <Files>
        <HeaderBar>
          <ButtonGroup>
            <Segment $w={32} $first><NavArrow left /></Segment>
            <Segment $w={31} $dim><NavArrow color="#8f8c84" /></Segment>
          </ButtonGroup>
          <ButtonGroup>
            <Segment $w={22} $first $dim><PathCaret left /></Segment>
            <Segment $w={77}>
              <HeaderIcon d={FILLS.home} fill />
              Home
            </Segment>
            {PATH_PARTS.map(([name, width]) => (
              <Segment key={name} $w={width}>{name}</Segment>
            ))}
            <Segment $w={67} $current>Images</Segment>
            <Segment $w={22} $dim><PathCaret /></Segment>
          </ButtonGroup>
          <HeaderTools>
            <ToolButton>
              <svg width="16" height="16" viewBox="0 0 16 16" fill="none" stroke="#dfdbd2" strokeWidth="2">
                <circle cx="6.500" cy="6.500" r="5" />
                <path d="M10 10l5 5" />
              </svg>
            </ToolButton>
            <ToolButton>
              <svg width="12" height="12" viewBox="0 0 12 12" fill="#dfdbd2">
                <rect width="5" height="5" />
                <rect x="7" width="5" height="5" />
                <rect y="7" width="5" height="5" />
                <rect x="7" y="7" width="5" height="5" />
              </svg>
            </ToolButton>
            <ToolButton>
              <svg width="12" height="10" viewBox="0 0 12 10" fill="#dfdbd2">
                <rect width="12" height="2" />
                <rect y="4" width="12" height="2" />
                <rect y="8" width="12" height="2" />
              </svg>
            </ToolButton>
            <HeaderDivider />
            <WindowButtons>
              <WindowButton>
                <svg width="8" height="8" viewBox="0 0 8 8"><rect y="3.500" width="8" height="1" fill="#3c3b37" /></svg>
              </WindowButton>
              <WindowButton>
                <svg width="8" height="8" viewBox="0 0 8 8"><rect x="0.500" y="1.500" width="7" height="5" fill="none" stroke="#3c3b37" /></svg>
              </WindowButton>
              <WindowButton $close>
                <svg width="8" height="8" viewBox="0 0 8 8"><path d="M1.500 1.500l5 5M6.500 1.500l-5 5" stroke="#3c3b37" /></svg>
              </WindowButton>
            </WindowButtons>
          </HeaderTools>
        </HeaderBar>
        <FilesBody>
          <Sidebar>
            {SIDEBAR.map(([label, icon]) => (
              <SidebarItem key={label}>
                <SidebarIcon>{icon}</SidebarIcon>
                <SidebarLabel>{label}</SidebarLabel>
              </SidebarItem>
            ))}
            <SidebarItem $gap>
              <SidebarIcon><HeaderIcon d={ICONS.plus} /></SidebarIcon>
              <SidebarLabel>Other Locations</SidebarLabel>
            </SidebarItem>
          </Sidebar>
          <Content>
            <ColumnBar>
              <ColumnHead $first>Name<SortArrow /></ColumnHead>
              <ColumnHead>Size</ColumnHead>
              <ColumnHead>Modified</ColumnHead>
            </ColumnBar>
            <EmptyState>
              <Folder />
              Folder is Empty
            </EmptyState>
          </Content>
        </FilesBody>
      </Files>

      <ShotWindow>
        <ShotHeader>
          <ShotButton>Cancel</ShotButton>
          <ShotButton $primary>Take Screenshot</ShotButton>
        </ShotHeader>
        <ShotBody>
          <ShotHeading>Take Screenshot</ShotHeading>
          <ShotGrab>
            <CameraSlot><Camera /></CameraSlot>
            <ShotOptions>
              <FocusRing $on><Radio $on />Grab the whole screen</FocusRing>
              <FocusRing><Radio />Grab the current window</FocusRing>
              <FocusRing><Radio />Select area to grab</FocusRing>
              <DelayRow>
                Grab after a delay of
                <SpinBox>
                  <SpinValue>0</SpinValue>
                  <SpinButton $dim>−</SpinButton>
                  <SpinButton>+</SpinButton>
                </SpinBox>
                seconds
              </DelayRow>
            </ShotOptions>
          </ShotGrab>
          <EffectsHeading>Effects</EffectsHeading>
          <CheckRow><CheckBox />Include pointer</CheckRow>
          <CheckRow $off>
            <CheckBox $off>
              <svg width="10" height="10" viewBox="0 0 10 10" fill="none" stroke="#a9a59f" strokeWidth="1.600">
                <path d="M1.500 5l2.500 2.500L8.500 2" />
              </svg>
            </CheckBox>
            Include the window border
          </CheckRow>
          <EffectRow>
            Apply effect:
            <EffectSelect>None<EffectCaret /></EffectSelect>
          </EffectRow>
        </ShotBody>
      </ShotWindow>

      <ClusterDialog>
        <DialogTitle>Cluster &amp; Edit column "name"</DialogTitle>
        <DialogBody>
          <Intro>
            This feature helps you find groups of different cell values that might be alternative representations of the same thing. For example, the two strings "New York" and "new york" are very likely to refer to the same concept and just have capitalization differences, and "Gödel" and "Godel" probably refer to the same person. <IntroLink>Find out more ...</IntroLink>
          </Intro>
          <MethodRow>
            Method
            <Picker $w={137} $after={122}>key collision<Chevron /></Picker>
            Keying Function
            <Picker $w={143}>fingerprint<Chevron /></Picker>
            <ClusterCount><b>30780</b> clusters found</ClusterCount>
          </MethodRow>
          <ClusterColumns>
            <ClusterBox>
              <ClusterRow $gray $h={43}>
                <CountCell $w={96} />
                <Choices $w={340} $indent={22}>
                  <Choice><ChoiceLink>Poached Eggs, 2 On Toast</ChoiceLink><ChoiceRows>(1 rows)</ChoiceRows></Choice>
                  <Choice><ChoiceLink>[eggs] Poached On Toast (2)</ChoiceLink><ChoiceRows>(1 rows)</ChoiceRows></Choice>
                </Choices>
              </ClusterRow>
              <ClusterRow $h={392} $top={14}>
                <CountCell $w={55}>26</CountCell>
                <CountCell $w={30}>35</CountCell>
                <Choices $w={340} $indent={33}>
                  {CHOICES.map(([name, rows]) => (
                    <Choice key={name}>
                      <ChoiceLink>{name}</ChoiceLink>
                      <ChoiceRows>({rows} rows)</ChoiceRows>
                    </Choice>
                  ))}
                </Choices>
                <ClusterCheck />
                <ClusterInput>Imported Ginger Ale, C. &amp; C.</ClusterInput>
              </ClusterRow>
              <ClusterRow $gray $h={20} $top={12}>
                <CountCell $w={425} />
                <ClusterCheck />
                <ClusterInput />
              </ClusterRow>
              <ScrollTrack />
            </ClusterBox>
            <HistColumn>
              {HISTOGRAMS.map((hist) => (
                <Histogram key={hist.label} {...hist} />
              ))}
            </HistColumn>
          </ClusterColumns>
        </DialogBody>
        <DialogFooter>
          <FooterButton $w={70}>Select All</FooterButton>
          <FooterButton $w={84}>Unselect All</FooterButton>
          <FooterButton $w={104} $push={292}>Export Clusters</FooterButton>
          <FooterButton $w={208} $strong>Merge Selected &amp; Re-Cluster</FooterButton>
          <FooterButton $w={155}>Merge Selected &amp; Close</FooterButton>
          <FooterButton $w={44}>Close</FooterButton>
        </DialogFooter>
      </ClusterDialog>
    </Desktop>
  );
};

export default App;
